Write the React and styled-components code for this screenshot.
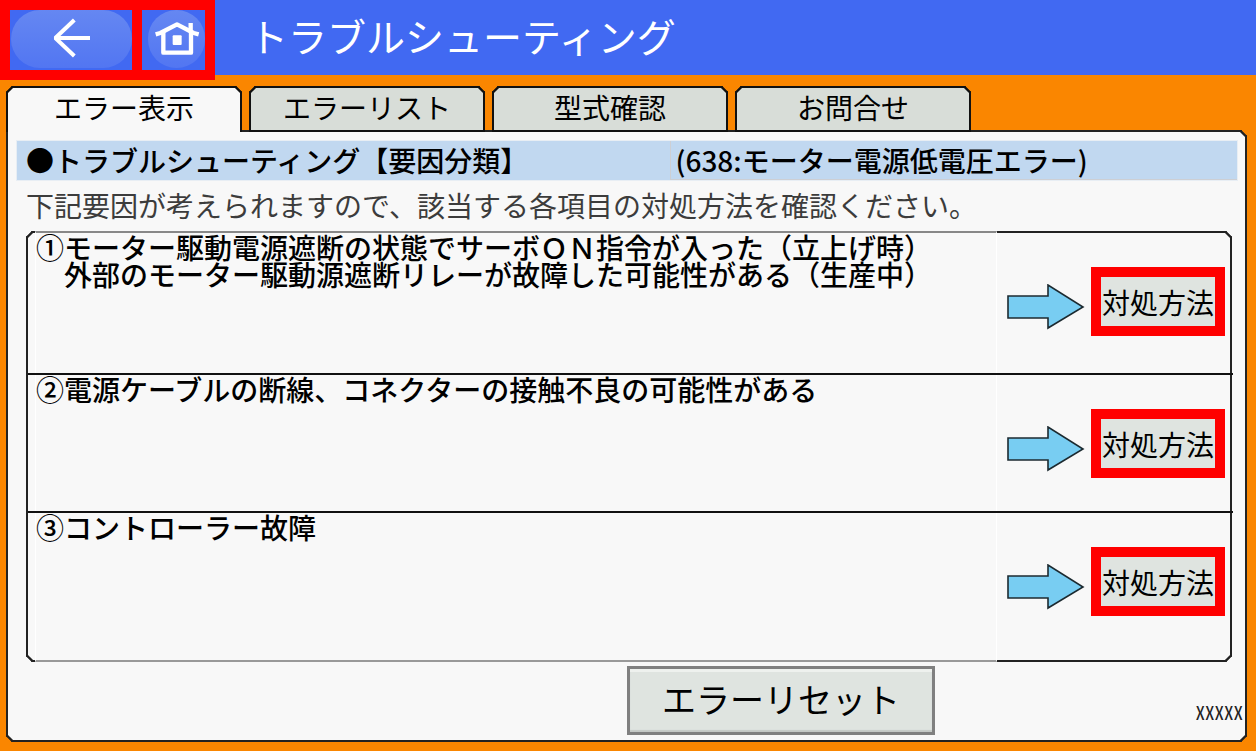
import React, { useState } from 'react';
import styled, { createGlobalStyle } from 'styled-components';

const GlobalStyle = createGlobalStyle`
  * {
    box-sizing: border-box;
  }
  body {
    margin: 0;
    background: #fa8600;
    font-family: 'Noto Sans CJK JP', sans-serif;
    color: #000;
  }
  button {
    font-family: inherit;
    color: inherit;
    margin: 0;
    padding: 0;
    cursor: pointer;
  }
`;

const Page = styled.div`
  display: flex;
  flex-direction: column;
  min-height: 100vh;
`;

const Header = styled.header`
  display: flex;
  align-items: flex-start;
  height: 75px;
  background: #4169f2;
`;

const NavButton = styled.button`
  flex: none;
  width: ${props => (props.$wide ? '142px' : '73px')};
  height: 80px;
  border: 10px solid #f00;
  border-left-width: ${props => (props.$wide ? '10px' : '0')};
  background: #4169f2;
`;

const NavFace = styled.span`
  display: flex;
  align-items: center;
  justify-content: center;
  height: 58px;
  margin: 0 0 2px ${props => (props.$round ? '6px' : '1px')};
  padding: 0 0 3px ${props => (props.$round ? '1px' : '0')};
  border-radius: 29px;
  background: linear-gradient(#6587f2, #5276f2);
`;

const Title = styled.h1`
  margin: 0 0 0 34px;
  font-size: 39px;
  font-weight: 400;
  line-height: 70px;
  color: #fff;
`;

const Tabs = styled.div`
  display: flex;
  gap: 7px;
  margin: 11px 9px 0 6px;
`;

const Tab = styled.button`
  position: relative;
  flex: 0 1 236px;
  height: 46px;
  margin-bottom: -2px;
  padding-bottom: ${props => (props.$active ? '6px' : '4px')};
  border: 2px solid #111;
  border-bottom-width: ${props => (props.$active ? '0' : '2px')};
  border-radius: 6px 6px 0 0;
  corner-shape: bevel;
  background: ${props => (props.$active ? '#f8f8f8' : '#d8ddd8')};
  font-size: 28px;
  line-height: 36px;
`;

const Panel = styled.main`
  flex: 1;
  display: flex;
  flex-direction: column;
  margin: 0 9px 9px 6px;
  padding: 9px 8px 0 9px;
  border: 2px solid #222;
  border-radius: 0 6px 6px 6px;
  corner-shape: bevel;
  background: #f8f8f8;
`;

const Caption = styled.div`
  display: grid;
  grid-template-columns: 654fr 567fr;
  height: 39px;
  background: #c1d8f0;
  box-shadow: 0 0 0 1px #e8eef4;
`;

const CaptionText = styled.h2`
  margin: 0;
  padding-left: ${props => (props.$detail ? '4px' : '9px')};
  border: solid #cdcfd4;
  border-width: ${props => (props.$detail ? '0 0 1px 1px' : '0')};
  font-size: 28px;
  font-weight: 500;
  line-height: 38px;
`;

const Guide = styled.p`
  margin: 5px 9px;
  font-size: 28px;
  line-height: 41px;
  color: #3c3c3c;
`;

const CauseList = styled.ol`
  list-style: none;
  margin: 0 5px 0 9px;
  padding: 0;
  border: 2px solid #222;
  border-radius: 6px;
  corner-shape: bevel;
`;

const Cause = styled.li`
  display: flex;
  height: ${props => props.$height}px;
  margin-right: -3px;
  padding: 0 3px 0 7px;
  border-top: 2px solid #111;

  &:first-child {
    border-top: 0;
  }
`;

const CauseText = styled.div`
  flex: 1;
  padding-top: 1px;
  border: solid #fff;
  border-width: 0 1px;
  font-size: 28px;
  font-weight: 500;
  line-height: 27px;
  white-space: pre-line;

  ${Cause}:first-child & {
    margin-top: -2px;
    border-top: 2px solid #888;
  }
  ${Cause}:last-child & {
    margin-bottom: -2px;
    border-bottom: 2px solid #999;
  }
`;

const CauseAction = styled.div`
  flex: none;
  display: flex;
  align-items: flex-start;
  gap: 6px;
  padding: 34px 5px 0 10px;

  svg {
    margin-top: 17px;
  }
`;

const MethodButton = styled.button`
  width: 134px;
  height: 69px;
  padding-top: 2px;
  border: 10px solid #f00;
  background: #dfe4e0;
  font-size: 28px;
  line-height: 41px;
  white-space: nowrap;
`;

const Footer = styled.footer`
  display: flex;
  align-items: flex-start;
  justify-content: space-between;
  padding: 4px 0 5px 50%;
`;

const ResetButton = styled.button`
  width: 308px;
  height: 69px;
  padding-bottom: 4px;
  border: 3px solid #808080;
  background: #dfe4e0;
  box-shadow: inset 0 3px 0 #eef1ee, inset 0 -2px 1px #c4c8c5;
  font-size: 34px;
  line-height: 50px;
`;

const ScreenCode = styled.span`
  margin: 35px -6px 0 0;
  font-family: 'Noto Sans Mono CJK JP', 'Noto Sans CJK JP', sans-serif;
  font-size: 19px;
  line-height: 22px;
  color: #222;
`;

const BackIcon = () => (
  <svg
    width="40"
    height="40"
    viewBox="153 53 120 120"
    fill="none"
    stroke="#fff"
    strokeWidth="12"
    strokeLinejoin="bevel"
    aria-hidden="true"
  >
    <path d="M267 113H163M220 59L163 113L220 167" />
  </svg>
);

const HomeIcon = () => (
  <svg
    width="46"
    height="36"
    viewBox="463 56 138 108"
    fill="none"
    stroke="#fff"
    strokeWidth="13"
    strokeLinejoin="round"
    aria-hidden="true"
  >
    <path d="M468 99L482 95L532 69L582 95L597 99" />
    <path d="M573 65V92" />
    <path d="M491 92V154H574V92" />
    <rect x="519" y="102" width="27" height="29" rx="3" fill="#fff" stroke="none" />
  </svg>
);

const ArrowIcon = () => (
  <svg width="78" height="46" viewBox="0 0 78 46" aria-hidden="true">
    <path d="M1 12H41V1L76 23L41 44V34H1Z" fill="#78cdf2" stroke="#1c2a30" strokeWidth="1.6" />
  </svg>
);

const tabs = ['エラー表示', 'エラーリスト', '型式確認', 'お問合せ'];

const causes = [
  {
    id: 1,
    height: 140,
    text: '①モーター駆動電源遮断の状態でサーボＯＮ指令が入った（立上げ時）\n　外部のモーター駆動源遮断リレーが故障した可能性がある（生産中）'
  },
  { id: 2, height: 138, text: '②電源ケーブルの断線、コネクターの接触不良の可能性がある' },
  { id: 3, height: 149, text: '③コントローラー故障' }
];

const App = () => {
  const [activeTab, setActiveTab] = useState(0);

  return (
    <Page>
      <GlobalStyle />
      <Header>
        <NavButton type="button" $wide aria-label="戻る">
          <NavFace>
            <BackIcon />
          </NavFace>
        </NavButton>
        <NavButton type="button" aria-label="ホーム">
          <NavFace $round>
            <HomeIcon />
          </NavFace>
        </NavButton>
        <Title>トラブルシューティング</Title>
      </Header>
      <Tabs role="tablist">
        {tabs.map((label, index) => (
          <Tab
            key={label}
            type="button"
            role="tab"
            aria-selected={index === activeTab}
            $active={index === activeTab}
            onClick={() => setActiveTab(index)}
          >
            {label}
          </Tab>
        ))}
      </Tabs>
      <Panel>
        <Caption>
          <CaptionText>●トラブルシューティング【要因分類】</CaptionText>
          <CaptionText $detail>(638:モーター電源低電圧エラー)</CaptionText>
        </Caption>
        <Guide>下記要因が考えられますので、該当する各項目の対処方法を確認ください。</Guide>
        <CauseList>
          {causes.map(cause => (
            <Cause key={cause.id} $height={cause.height}>
              <CauseText>{cause.text}</CauseText>
              <CauseAction>
                <ArrowIcon />
                <MethodButton type="button">対処方法</MethodButton>
              </CauseAction>
            </Cause>
          ))}
        </CauseList>
        <Footer>
          <ResetButton type="button">エラーリセット</ResetButton>
          <ScreenCode>XXXXX</ScreenCode>
        </Footer>
      </Panel>
    </Page>
  );
};

export default App;
